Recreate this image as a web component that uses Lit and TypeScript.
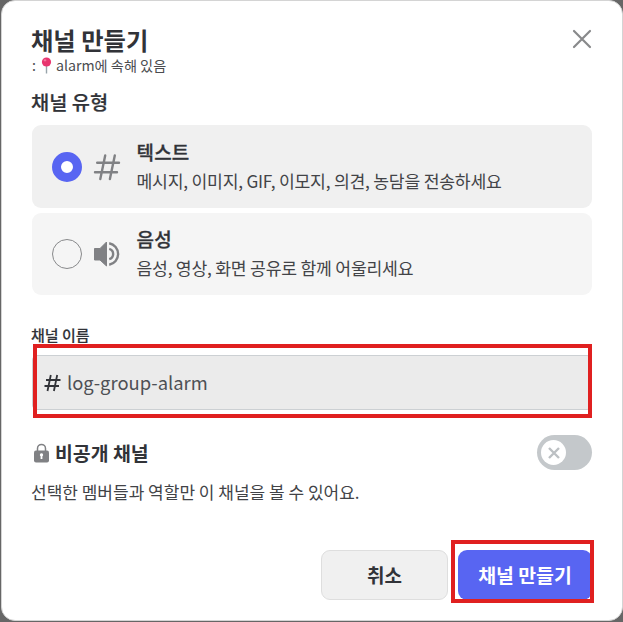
import { LitElement, html, css, svg } from "lit";
import { customElement, property } from "lit/decorators.js";

const base = css`
  * { box-sizing: border-box; }
  svg { display: block; flex: none; }
`;

@customElement("channel-option")
class ChannelOption extends LitElement {
  @property({ type: Boolean }) selected = false;
  @property() kind = "text";
  @property() label = "";
  @property() description = "";

  static styles = [base, css`
    :host { display: block; }
    .row { display: flex; align-items: center; height: 82px; padding-left: 20px; border-radius: 9px; background: #f5f5f5; }
    .row.on { height: 83px; background: #f0f0f0; }
    .radio { width: 30px; height: 30px; border-radius: 50%; border: 1.3px solid #88898b; flex: none; }
    .on .radio { border: 9px solid #5865f2; background: #fff; }
    .icon { margin-left: 11px; width: 28px; }
    .texts { margin-left: 15.5px; white-space: nowrap; }
    .label { font-size: 19px; font-weight: 500; -webkit-text-stroke: 0.3px #313338; line-height: 28px; height: 28px; color: #313338; margin-top: -1px; margin-bottom: 1px; letter-spacing: 0.2px; }
    .desc { font-size: 17.2px; line-height: 28px; height: 28px; color: #424347; letter-spacing: -0.22px; }
  `];

  render() {
    const glyph = this.kind === "text"
      ? svg`<path d="M4.2 9.7H26M2 19.3H24M12.2 2.5L7.3 26M21.8 2.5L16.9 26" fill="none" stroke="#808184" stroke-width="2.4" stroke-linecap="round"/>`
      : svg`<path d="M1.5 8.5H7L13.5 2V26L7 20H1.5Z" fill="#808184" stroke="#808184" stroke-width="1" stroke-linejoin="round"/>
          <path d="M16.2 3.2A11 11 0 0 1 16.2 24.8M16.2 8.8A5.4 5.4 0 0 1 16.2 19.2" fill="none" stroke="#808184" stroke-width="2.4"/>`;
    return html`<div class="row ${this.kind} ${this.selected ? "on" : ""}">
      <div class="radio"></div>
      <svg class="icon" width="28" height="28" viewBox="0 0 28 28">${glyph}</svg>
      <div class="texts"><div class="label">${this.label}</div><div class="desc">${this.description}</div></div>
    </div>`;
  }
}

@customElement("app-root")
class AppRoot extends LitElement {
  static styles = [base, css`
    :host { display: block; width: 623px; height: 622px; padding: 0 0 1px 1px; background: #666; overflow: hidden; font-family: "Noto Sans CJK KR", sans-serif; color: #313338; }
    .card { position: relative; width: 622px; height: 621px; border: 1px solid #d4d4d4; border-radius: 14px; background: #fff; padding: 24px 30px 0 30px; display: flex; flex-direction: column; white-space: nowrap; }
    header { display: flex; justify-content: space-between; height: 31px; margin-left: -1px; }
    h1 { margin: 0; font-size: 24.3px; line-height: 30px; font-weight: 700; }
    .close { margin: 4px 0 0; }
    .parent { display: flex; align-items: center; height: 18px; font-size: 14.2px; line-height: 18px; color: #4b4c50; }
    .pin { margin: 0 4px 0 5px; }
    h2 { margin: 14px 0 10px -1px; font-size: 19.8px; line-height: 27px; font-weight: 500; -webkit-text-stroke: 0.2px #313338; }
    .options { display: flex; flex-direction: column; gap: 5px; }
    .field-label { margin: 30px 0 0 -1px; font-size: 15px; line-height: 20px; height: 20px; font-weight: 500; -webkit-text-stroke: 0.15px #313338; }
    .input { margin-top: 10px; height: 55px; flex: none; border: 1px solid #ccd0d3; border-radius: 5px; background: #ebebeb; display: flex; align-items: center; padding-left: 11px; gap: 6px; font-size: 18.4px; color: #4e5055; }
    .value { margin-top: -2px; }
    .private { display: flex; align-items: center; height: 35px; margin-top: 25px; }
    .private h3 { margin: 0 auto 0 4px; font-size: 19.4px; line-height: 30px; font-weight: 700; }
    .toggle { width: 55px; height: 35px; border-radius: 18px; background: #c4c8cb; padding: 5px 4px; }
    .knob { width: 25px; height: 25px; border-radius: 50%; background: #fff; display: grid; place-items: center; }
    .hint { margin: 8px 0 0 -1px; font-size: 17px; line-height: 28px; color: #424347; }
    footer { display: flex; justify-content: flex-end; gap: 10px; margin-top: 44px; }
    .btn { height: 50px; border-radius: 9px; display: grid; place-items: center; font-size: 19.4px; font-weight: 700; padding-bottom: 2px; }
    .cancel { width: 127px; background: #f0f0f0; border: 1px solid #dedede; font-size: 19px; }
    .create { width: 134px; background: #5865f2; color: #fff; }
    .mark { position: absolute; border: 4px solid #e02020; }
    .mark-name { left: 31px; top: 343px; width: 559px; height: 74px; }
    .mark-create { left: 449px; top: 539px; width: 143px; height: 63px; }
  `];

  render() {
    return html`<main class="card">
      <header>
        <h1>채널 만들기</h1>
        <svg class="close" width="20" height="20" viewBox="0 0 20 20"><path d="M2 2L18 18M18 2L2 18" stroke="#88898b" stroke-width="2.2" stroke-linecap="round"/></svg>
      </header>
      <div class="parent"><span>:</span>
        <svg class="pin" width="11" height="17" viewBox="0 0 11 17"><path d="M5.5 8V16.5" stroke="#98a4ab" stroke-width="1.4"/><circle cx="5.5" cy="5" r="4.6" fill="#e8356f"/><ellipse cx="4" cy="3.3" rx="1.4" ry="1.1" fill="#f3799d"/></svg>
        <span class="parent-name">alarm에 속해 있음</span>
      </div>
      <h2>채널 유형</h2>
      <div class="options">
        <channel-option selected kind="text" label="텍스트" description="메시지, 이미지, GIF, 이모지, 의견, 농담을 전송하세요"></channel-option>
        <channel-option kind="voice" label="음성" description="음성, 영상, 화면 공유로 함께 어울리세요"></channel-option>
      </div>
      <div class="field-label">채널 이름</div>
      <div class="input">
        <svg width="17" height="18" viewBox="0 0 17 18"><path d="M2 6H16.5M.5 12H15M6.8 1L3.5 17M13.2 1L9.9 17" fill="none" stroke="#313338" stroke-width="1.8"/></svg>
        <span class="value">log-group-alarm</span>
      </div>
      <div class="private">
        <svg width="19" height="20" viewBox="0 0 19 20"><path d="M5.5 9V5.4A4 4 0 0 1 13.5 5.4V9" fill="none" stroke="#808184" stroke-width="1.5"/><rect x="2" y="7.5" width="15" height="12" rx="2" fill="#808184"/><path d="M9.5 10.2A1.7 1.7 0 0 1 10.4 13.3V16H8.6V13.3A1.7 1.7 0 0 1 9.5 10.2Z" fill="#fff"/></svg>
        <h3>비공개 채널</h3>
        <div class="toggle"><div class="knob"><svg width="12" height="12" viewBox="0 0 12 12"><path d="M1 1L11 11M11 1L1 11" stroke="#bcc0c3" stroke-width="2.4"/></svg></div></div>
      </div>
      <div class="hint">선택한 멤버들과 역할만 이 채널을 볼 수 있어요.</div>
      <footer><div class="btn cancel">취소</div><div class="btn create">채널 만들기</div></footer>
      <div class="mark mark-name"></div>
      <div class="mark mark-create"></div>
    </main>`;
  }
}
